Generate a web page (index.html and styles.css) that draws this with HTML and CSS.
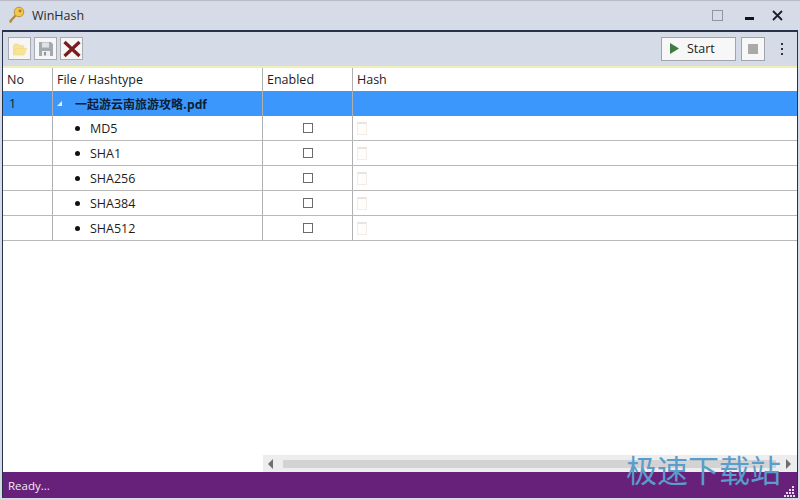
FILE: index.html
```html
<!DOCTYPE html>
<html lang="en">
<head>
<meta charset="utf-8">
<title>WinHash</title>
<link rel="stylesheet" href="styles.css">
</head>
<body>
<div class="window">
  <header class="titlebar">
    <svg class="appicon" width="18" height="18" viewBox="0 0 18 18"><path d="M8 9 2.5 15l.5 1.6" fill="none" stroke="#b9893a" stroke-width="2.4"/><circle cx="11" cy="6" r="4.8" fill="#f1c84c" stroke="#c2923a"/><circle cx="12" cy="5" r="1.4" fill="#a87a2c"/></svg>
    <span class="apptitle">WinHash</span>
    <span class="winbtns">
      <span class="maxbtn"></span>
      <span class="minbtn"></span>
      <svg width="11" height="11" viewBox="0 0 11 11"><path d="M1 1l9 9M10 1l-9 9" stroke="#17202c" stroke-width="1.8" fill="none"/></svg>
    </span>
  </header>
  <div class="frame">
    <div class="toolbar">
      <button class="tool"><svg width="16" height="16" viewBox="0 0 16 16"><path d="M1.500 13.500V4.500l1-1.500h3.500l1 1.500h4l1 1.500v1" fill="#f4e39a" stroke="#ecd67e" stroke-width=".6"/><path d="M1.500 14l2.500-6.500h10.500l-2.500 6.500z" fill="#f7e594" stroke="#ecd67e" stroke-width=".6"/></svg></button>
      <button class="tool"><svg width="16" height="16" viewBox="0 0 16 16"><path d="M1 1h12l2 2v12H1z" fill="#a3a9ae"/><rect x="4" y="1.500" width="7" height="5" fill="#dfe3e6"/><rect x="4" y="10" width="8" height="5" fill="#eceef0"/><rect x="6" y="11" width="2" height="3.500" fill="#8d9499"/></svg></button>
      <button class="tool"><svg width="20" height="18" viewBox="0 0 20 18"><path d="M2.500 2l15 14M17.500 2l-15 14" stroke="#7c1a1e" stroke-width="3.200" fill="none"/></svg></button>
      <span class="spacer"></span>
      <button class="start"><svg width="9" height="11" viewBox="0 0 9 11"><path d="M0 0l9 5.500L0 11z" fill="#3f7c3f"/></svg><span>Start</span></button>
      <button class="stop"><span class="stopmark"></span></button>
      <span class="kebab"><i></i><i></i><i></i></span>
    </div>
    <div class="table">
      <div class="row head"><div class="cell">No</div><div class="cell">File / Hashtype</div><div class="cell">Enabled</div><div class="cell">Hash</div></div>
      <div class="row file"><div class="cell">1</div><div class="cell"><svg class="twisty" width="5" height="5" viewBox="0 0 5 5"><path d="M5 0v5H0z" fill="#e9f2fb"/></svg><b class="fname">一起游云南旅游攻略.pdf</b></div><div class="cell"></div><div class="cell"></div></div>
      <div class="row"><div class="cell"></div><div class="cell hashtype"><span class="bullet"></span>MD5</div><div class="cell center"><span class="check"></span></div><div class="cell"><span class="doc"></span></div></div>
      <div class="row"><div class="cell"></div><div class="cell hashtype"><span class="bullet"></span>SHA1</div><div class="cell center"><span class="check"></span></div><div class="cell"><span class="doc"></span></div></div>
      <div class="row"><div class="cell"></div><div class="cell hashtype"><span class="bullet"></span>SHA256</div><div class="cell center"><span class="check"></span></div><div class="cell"><span class="doc"></span></div></div>
      <div class="row"><div class="cell"></div><div class="cell hashtype"><span class="bullet"></span>SHA384</div><div class="cell center"><span class="check"></span></div><div class="cell"><span class="doc"></span></div></div>
      <div class="row"><div class="cell"></div><div class="cell hashtype"><span class="bullet"></span>SHA512</div><div class="cell center"><span class="check"></span></div><div class="cell"><span class="doc"></span></div></div>
      <div class="tablefill"></div>
      <div class="hscroll"><span class="arrow left"></span><span class="thumb"></span><span class="arrow right"></span></div>
    </div>
    <footer class="status">
      <span>Ready...</span>
      <svg class="grip" width="11" height="11" viewBox="0 0 11 11" fill="#e4dcec"><rect x="8" y="0" width="2" height="2"/><rect x="5" y="3" width="2" height="2"/><rect x="8" y="3" width="2" height="2"/><rect x="2" y="6" width="2" height="2"/><rect x="5" y="6" width="2" height="2"/><rect x="8" y="6" width="2" height="2"/><rect x="0" y="9" width="2" height="2"/><rect x="3" y="9" width="2" height="2"/><rect x="6" y="9" width="2" height="2"/><rect x="9" y="9" width="2" height="2"/></svg>
    </footer>
  </div>
  <div class="watermark">极速下载站</div>
</div>
</body>
</html>
```
FILE: styles.css
```css
* { box-sizing: border-box; }
html, body { margin: 0; padding: 0; }
body {
  width: 800px;
  height: 500px;
  overflow: hidden;
  font-family: "Open Sans", "Noto Sans", "Noto Sans CJK SC", sans-serif;
  font-size: 12.5px;
  color: #1c1c1c;
}
.window {
  position: relative;
  width: 800px;
  height: 500px;
  background: #d6dbe8;
  border-top: 1px solid #b9bcc6;
  display: flex;
  flex-direction: column;
}
.titlebar {
  height: 29px;
  flex: none;
  display: flex;
  align-items: center;
  padding: 0 17px 0 8px;
}
.appicon { margin-top: -1px; }
.apptitle { margin-left: 6px; font-size: 12.5px; color: #2a2a2a; margin-top: -1px; }
.winbtns { margin-left: auto; display: flex; align-items: center; }
.maxbtn { width: 11px; height: 11px; border: 1px solid #8f95a3; margin-right: 22px; }
.minbtn { width: 9px; height: 3px; background: #10141c; margin-right: 18px; margin-top: 5px; }
.frame {
  flex: 1;
  margin: 0 2px 2px 2px;
  border-top: 2px solid #27324a;
  border-left: 1px solid #27324a;
  border-right: 1px solid #27324a;
  display: flex;
  flex-direction: column;
  min-height: 0;
}
.toolbar {
  height: 36px;
  flex: none;
  display: flex;
  align-items: center;
  padding: 0 14px 1px 5px;
  gap: 3px;
  background: #d6dbe8;
  border-bottom: 2px solid #f0eeb8;
}
button { font: inherit; padding: 0; margin: 0; }
.tool {
  width: 23px;
  height: 23px;
  border: 1px solid #a8abb2;
  background: #f6f6f6;
  display: flex;
  align-items: center;
  justify-content: center;
}
.spacer { flex: 1; }
.start {
  width: 75px;
  height: 24px;
  border: 1px solid #a0a3aa;
  background: #f7f7f7;
  display: flex;
  align-items: center;
  padding-left: 8px;
  gap: 8px;
  color: #222;
  font-size: 12.5px;
}
.stop {
  width: 24px;
  height: 24px;
  margin-left: 2px;
  border: 1px solid #a0a3aa;
  background: #f7f7f7;
  display: flex;
  align-items: center;
  justify-content: center;
}
.stopmark { width: 10px; height: 10px; background: #a9a9a9; }
.kebab { display: flex; flex-direction: column; gap: 3px; margin-left: 13px; width: 2px; }
.kebab i { width: 2px; height: 2px; background: #333; display: block; }
.table {
  flex: 1;
  background: #fff;
  display: flex;
  flex-direction: column;
  min-height: 0;
}
.row {
  display: grid;
  grid-template-columns: 50px 210px 90px 1fr;
  height: 25px;
  flex: none;
  border-bottom: 1px solid #b9b9b9;
}
.row.head { height: 23px; border-bottom: 0; }
.row.head .cell { padding-bottom: 1px; }
.row.file { height: 25px; background: #3b97fb; border-bottom: 0; color: #0d2036; }
.cell {
  border-right: 1px solid #b0b0b0;
  padding-left: 4px;
  display: flex;
  align-items: center;
  white-space: nowrap;
}
.cell:last-child { border-right: 0; }
.row.file .cell { padding-bottom: 1px; }
.row.file .cell:first-child { padding-left: 6px; }
.twisty { flex: none; }
.fname { margin-left: 13px; font-family: "Noto Sans CJK SC", sans-serif; font-size: 12px; }
.hashtype { padding-left: 22px; }
.bullet { width: 5px; height: 5px; border-radius: 50%; background: #111; margin-right: 10px; }
.center { justify-content: center; padding-left: 0; }
.check { width: 10px; height: 10px; border: 1px solid #6b6b6b; background: #fff; }
.doc { width: 10px; height: 13px; border: 1px solid #f3ede5; border-top: 2px solid #e8e4e0; background: #fffdfb; }
.tablefill { flex: 1; }
.hscroll {
  height: 17px;
  flex: none;
  margin-left: 260px;
  background: #ededed;
  display: flex;
  align-items: center;
  gap: 10px;
  padding: 0 6px 0 5px;
}
.thumb { flex: 1; height: 8px; background: #d3d3d3; }
.arrow { width: 0; height: 0; border-top: 5px solid transparent; border-bottom: 5px solid transparent; }
.arrow.left { border-right: 5px solid #6f6f6f; }
.arrow.right { border-left: 5px solid #6f6f6f; }
.status {
  height: 26px;
  flex: none;
  background: #68217a;
  color: #eee;
  font-size: 11.5px;
  display: flex;
  align-items: center;
  justify-content: space-between;
  padding: 0 2px 0 5px;
}
.grip { align-self: flex-end; margin-bottom: 1px; }
.watermark {
  position: absolute;
  left: 626px;
  top: 450px;
  font-family: "Noto Sans CJK SC", sans-serif;
  font-size: 31px;
  line-height: 36px;
  color: #5a9ccb;
  white-space: nowrap;
}
```
